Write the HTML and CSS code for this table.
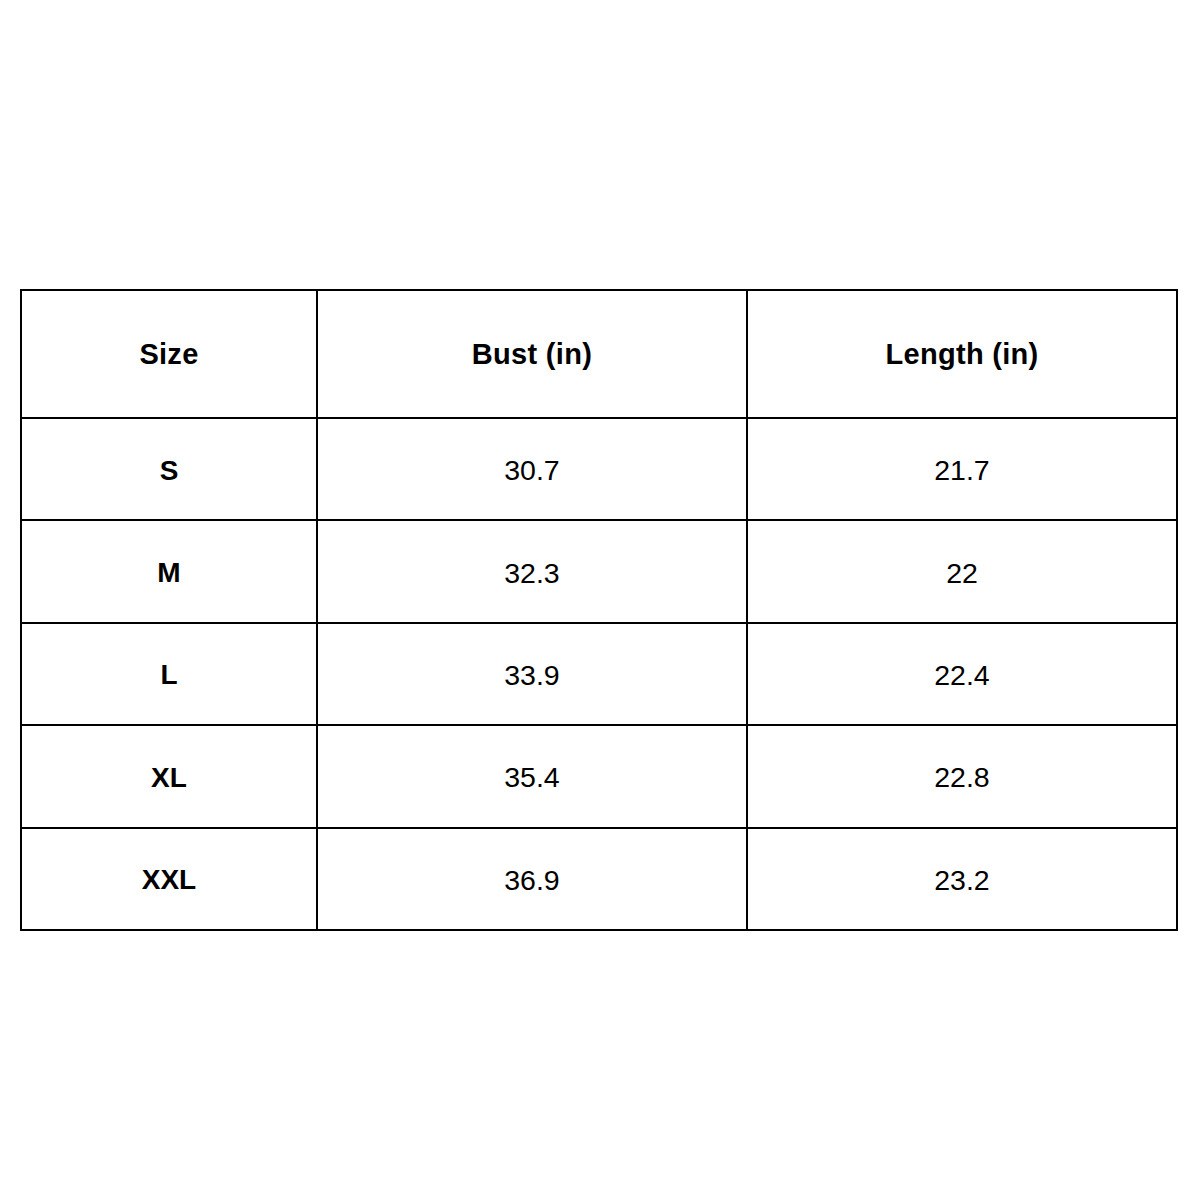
FILE: index.html
```html
<!DOCTYPE html>
<html>
<head>
<meta charset="utf-8">
<link rel="stylesheet" href="styles.css">
</head>
<body>
<div class="page">
  <table class="size-table">
    <colgroup>
      <col class="c1">
      <col class="c2">
      <col class="c3">
    </colgroup>
    <thead>
      <tr class="head-row">
        <th>Size</th>
        <th>Bust (in)</th>
        <th>Length (in)</th>
      </tr>
    </thead>
    <tbody>
      <tr><th>S</th><td>30.7</td><td>21.7</td></tr>
      <tr><th>M</th><td>32.3</td><td>22</td></tr>
      <tr><th>L</th><td>33.9</td><td>22.4</td></tr>
      <tr><th>XL</th><td>35.4</td><td>22.8</td></tr>
      <tr><th>XXL</th><td>36.9</td><td>23.2</td></tr>
    </tbody>
  </table>
</div>
</body>
</html>
```
FILE: styles.css
```css
html, body {
  margin: 0;
  padding: 0;
  background: #fff;
}
.page {
  padding: 289px 0 0 20px;
  font-family: "Liberation Sans", Arial, sans-serif;
  color: #000;
}
.size-table {
  border-collapse: collapse;
  width: 1156px;
  table-layout: fixed;
}
.c1 { width: 296px; }
.c2 { width: 430px; }
.c3 { width: 430px; }
.size-table th,
.size-table td {
  border: 2px solid #000;
  text-align: center;
  vertical-align: middle;
  padding: 0;
}
.size-table th {
  font-weight: bold;
  font-size: 28px;
}
.head-row th {
  font-size: 29px;
  letter-spacing: 0.3px;
}
.size-table td {
  font-weight: normal;
  font-size: 28.5px;
  padding-top: 3px;
}
.size-table tbody th {
  padding-top: 3px;
}
.head-row {
  height: 128px;
}
.size-table tbody tr {
  height: 102.4px;
}
```
